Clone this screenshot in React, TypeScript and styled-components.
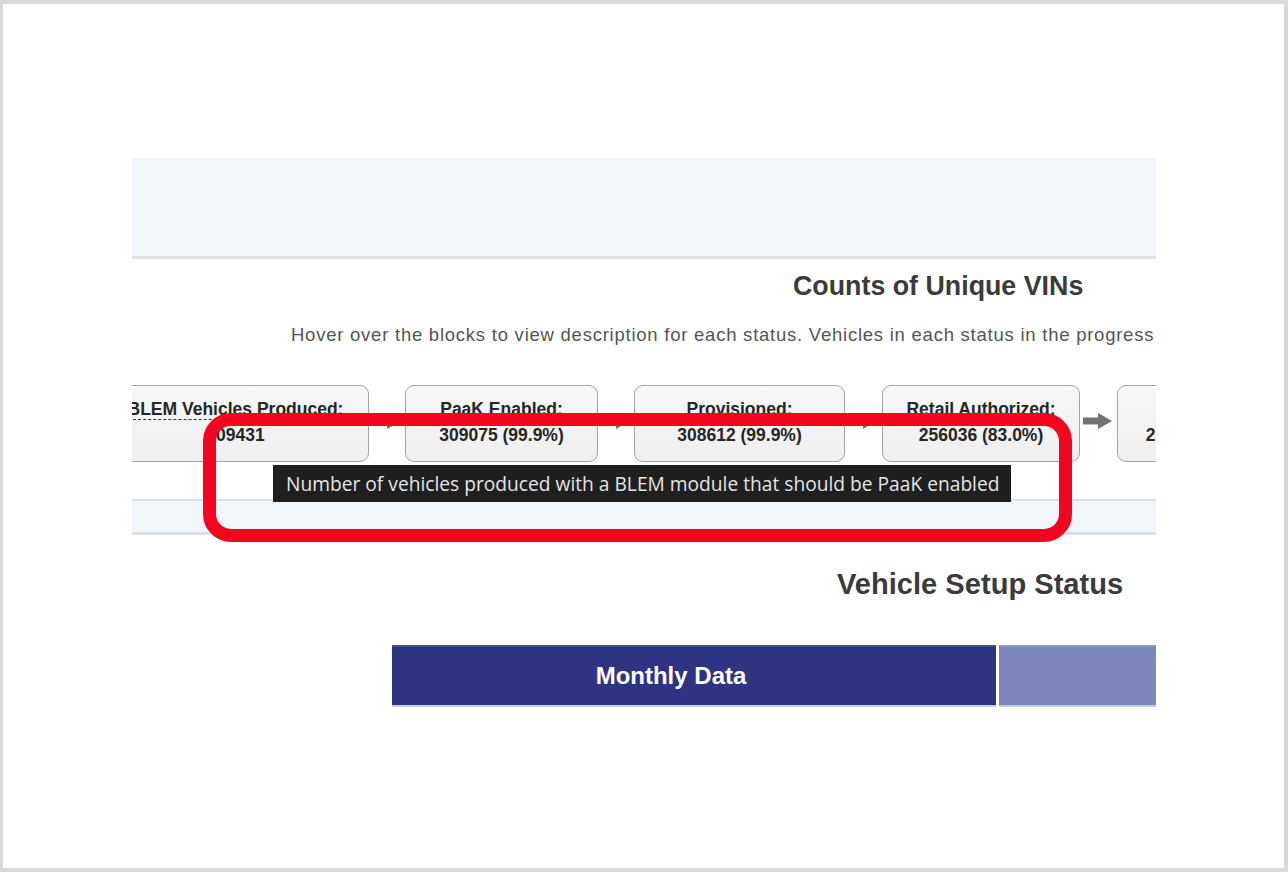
import React from "react";
import styled, { createGlobalStyle } from "styled-components";

const Global = createGlobalStyle`
  html, body { margin: 0; padding: 0; background: #ffffff; }
  body { font-family: "Liberation Sans", Arial, sans-serif; }
  * { box-sizing: border-box; }
`;

const Frame = styled.div`
  width: 1288px;
  height: 872px;
  border-style: solid;
  border-color: #d9d9d9;
  border-width: 4px 4px 4px 3px;
  background: #ffffff;
  padding: 154px 0 0 129px;
  overflow: hidden;
`;

const Viewport = styled.div`
  position: relative;
  width: 1024px;
  height: 700px;
  overflow: hidden;
`;

const HeaderBand = styled.div`
  height: 101px;
  background: #f1f6fb;
  border-bottom: 3px solid #dfe2e7;
`;

const SectionTitle = styled.h2<{ $indent: number; $top: number; $size: number }>`
  margin: ${(p) => p.$top}px 0 0 ${(p) => p.$indent}px;
  font-family: "Liberation Sans", Arial, sans-serif;
  font-size: ${(p) => p.$size}px;
  line-height: 30px;
  font-weight: 700;
  color: #3b3b3b;
  white-space: nowrap;
`;

const Subtitle = styled.p`
  margin: 23px 0 0 159px;
  font-size: 18.5px;
  letter-spacing: 0.76px;
  line-height: 22px;
  color: #555555;
  white-space: nowrap;
`;

const FlowRow = styled.div`
  display: flex;
  align-items: center;
  margin: 39px 0 0 -30px;
  width: 1200px;
`;

const StatusBox = styled.div<{ $w: number }>`
  flex: none;
  width: ${(p) => p.$w}px;
  height: 77px;
  border: 1.5px solid #a3a3a3;
  border-radius: 9px;
  background: linear-gradient(#f7f7f7, #efefef);
  padding-top: 10px;
  text-align: center;
  font-size: 17.5px;
  font-weight: 700;
  line-height: 26px;
  color: #262626;
  white-space: nowrap;
`;

const BoxLabel = styled.div``;

const Abbr = styled.span`
  border-bottom: 1px dashed #333333;
`;

const ArrowSlot = styled.div<{ $w: number }>`
  flex: none;
  width: ${(p) => p.$w}px;
  display: flex;
  justify-content: center;
  padding-right: 2px;
  margin-bottom: 6px;
`;

const Band = styled.div`
  margin-top: 37px;
  height: 36px;
  background: #f1f6fb;
  border-top: 2px solid #dcdfe3;
  border-bottom: 3px solid #dcdfe3;
`;

const Tabs = styled.div`
  display: flex;
  margin: 46px 0 0 260px;
  gap: 3px;
`;

const Tab = styled.div<{ $active?: boolean; $w: number }>`
  flex: none;
  width: ${(p) => p.$w}px;
  height: 62px;
  display: flex;
  align-items: center;
  justify-content: center;
  padding-right: ${(p) => (p.$active ? 46 : 0)}px;
  background: ${(p) => (p.$active ? "#2e3383" : "#7e87bc")};
  border-top: 2px solid ${(p) => (p.$active ? "#474b91" : "#9199c6")};
  border-bottom: 2px solid #c7cbe2;
  color: #ffffff;
  font-size: 24px;
  font-weight: 700;
  white-space: nowrap;
`;

const Tooltip = styled.div`
  position: absolute;
  left: 141px;
  top: 307px;
  width: 738px;
  height: 37px;
  background: #1f1f1f;
  color: #e4e4e4;
  font-family: "Open Sans", "Liberation Sans", sans-serif;
  font-size: 19.2px;
  line-height: 37px;
  padding-left: 13px;
  white-space: nowrap;
`;

const Highlight = styled.div`
  position: absolute;
  left: 71px;
  top: 255px;
  width: 869px;
  height: 129px;
  border: 13px solid #f2051f;
  border-radius: 28px;
`;

const Arrow = () => (
  <svg width="29" height="16" viewBox="0 0 29 16">
    <path d="M0 4.5 H15 V0 L29 8 L15 16 V11.5 H0 Z" fill="#737373" />
  </svg>
);

const steps = [
  { w: 267, label: "BLEM Vehicles Produced:", value: "309431", abbr: true, gap: 36 },
  { w: 193, label: "PaaK Enabled:", value: "309075 (99.9%)", gap: 36 },
  { w: 211, label: "Provisioned:", value: "308612 (99.9%)", gap: 37 },
  { w: 198, label: "Retail Authorized:", value: "256036 (83.0%)", gap: 37 },
  { w: 182, label: "Activated:", value: "238714 (77.3%)", gap: 0 },
];

export default function App() {
  return (
    <>
      <Global />
      <Frame>
        <Viewport>
          <HeaderBand />
          <SectionTitle $indent={661} $top={12} $size={26.8}>
            Counts of Unique VINs
          </SectionTitle>
          <Subtitle>
            Hover over the blocks to view description for each status. Vehicles in each status in the progress bar are a subset of the previous status.
          </Subtitle>
          <FlowRow>
            {steps.map((s, i) => (
              <React.Fragment key={s.label}>
                <StatusBox $w={s.w}>
                  <BoxLabel>{s.abbr ? <Abbr>{s.label}</Abbr> : s.label}</BoxLabel>
                  <BoxLabel>{s.value}</BoxLabel>
                </StatusBox>
                {i < steps.length - 1 && (
                  <ArrowSlot $w={s.gap}>
                    <Arrow />
                  </ArrowSlot>
                )}
              </React.Fragment>
            ))}
          </FlowRow>
          <Band />
          <SectionTitle $indent={705} $top={34} $size={29.1}>
            Vehicle Setup Status
          </SectionTitle>
          <Tabs>
            <Tab $active $w={604}>Monthly Data</Tab>
            <Tab $w={604}>Cumulative Data</Tab>
          </Tabs>
          <Tooltip>Number of vehicles produced with a BLEM module that should be PaaK enabled</Tooltip>
          <Highlight />
        </Viewport>
      </Frame>
    </>
  );
}
